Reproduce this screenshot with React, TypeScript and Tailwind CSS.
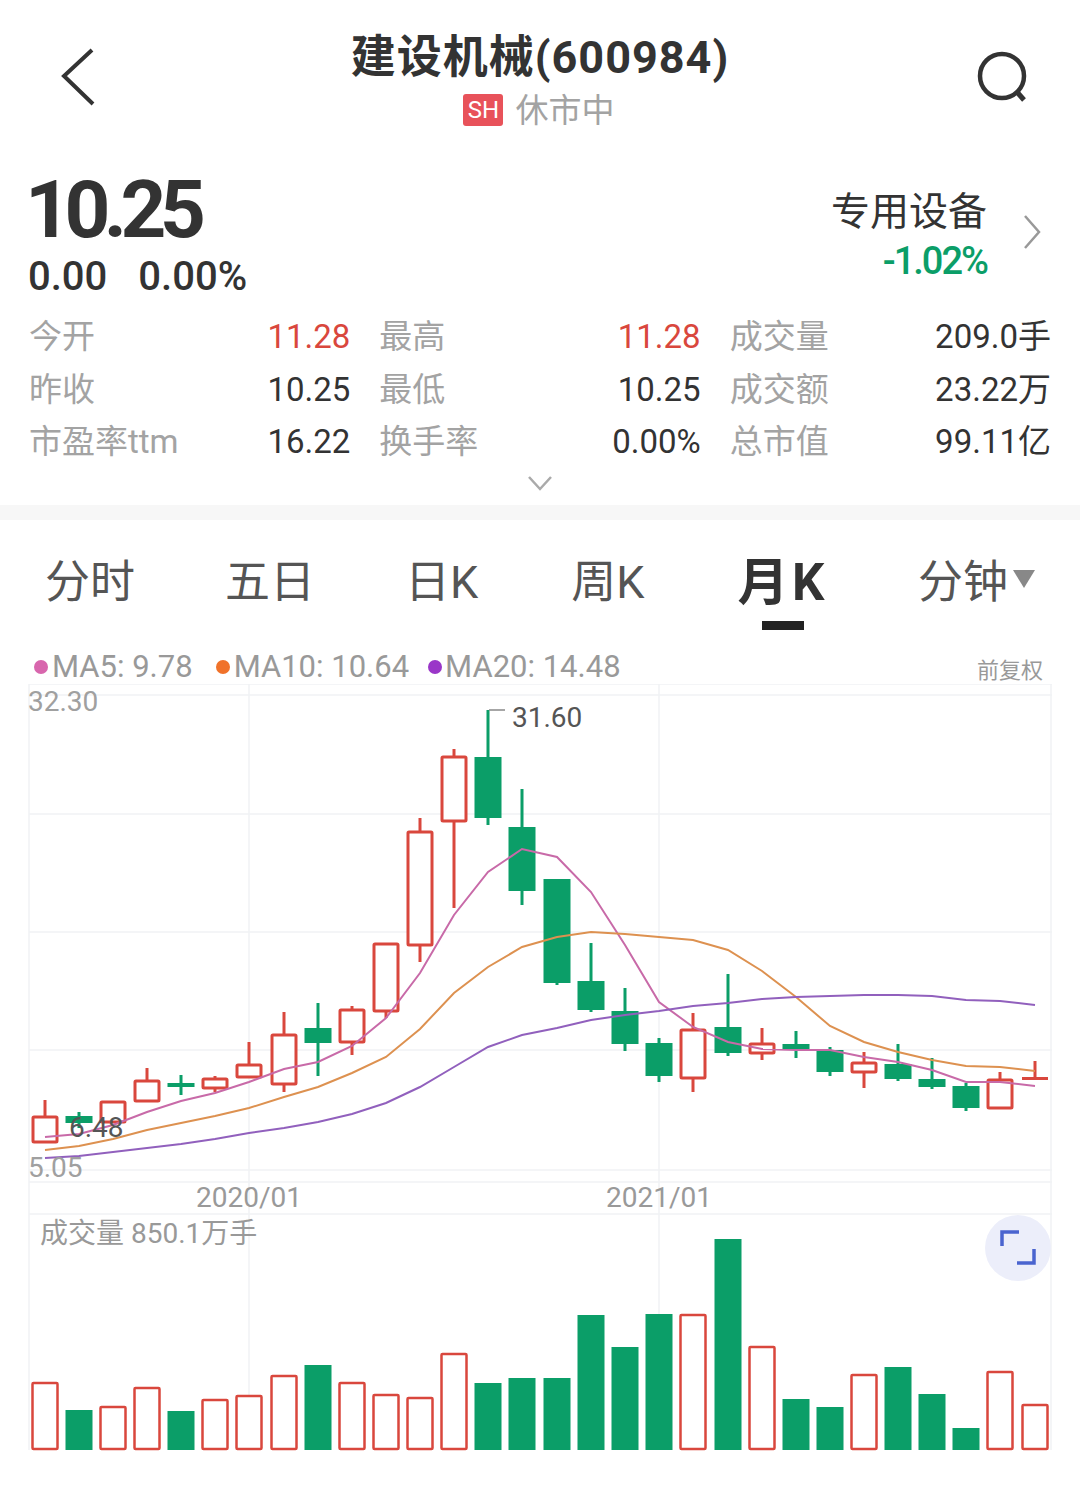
const FONT = '"Roboto","Noto Sans CJK SC",sans-serif';

type C = [number, number, number, number, number, "r" | "g"];
const candles: C[] = [
  [45, 1100, 1117, 1142, 1142, "r"],
  [79, 1112, 1116, 1123, 1128, "g"],
  [113, 1101, 1102, 1122, 1122, "r"],
  [147, 1068, 1081, 1101, 1101, "r"],
  [181, 1075, 1083, 1087, 1095, "g"],
  [215, 1076, 1079, 1088, 1092, "r"],
  [249, 1042, 1065, 1077, 1077, "r"],
  [284, 1012, 1035, 1084, 1092, "r"],
  [318, 1003, 1028, 1043, 1076, "g"],
  [352, 1006, 1010, 1042, 1055, "r"],
  [386, 943, 944, 1011, 1018, "r"],
  [420, 818, 832, 945, 962, "r"],
  [454, 749, 757, 821, 908, "r"],
  [488, 710, 757, 818, 825, "g"],
  [522, 789, 827, 891, 905, "g"],
  [557, 879, 879, 983, 985, "g"],
  [591, 943, 981, 1010, 1012, "g"],
  [625, 988, 1011, 1044, 1051, "g"],
  [659, 1038, 1043, 1076, 1082, "g"],
  [693, 1013, 1030, 1078, 1092, "r"],
  [728, 974, 1027, 1053, 1056, "g"],
  [762, 1028, 1044, 1053, 1060, "r"],
  [796, 1031, 1044, 1050, 1058, "g"],
  [830, 1047, 1050, 1072, 1076, "g"],
  [864, 1052, 1063, 1072, 1088, "r"],
  [898, 1044, 1064, 1079, 1081, "g"],
  [932, 1058, 1079, 1087, 1089, "g"],
  [966, 1083, 1086, 1108, 1111, "g"],
  [1000, 1072, 1080, 1108, 1109, "r"],
];

const xs = [...candles.map((c) => c[0]), 1035];
const ma5 = [1137, 1134, 1125, 1112, 1101, 1093, 1082, 1069, 1062, 1046, 1018, 973, 915, 872, 849, 857, 892, 945, 1002, 1027, 1042, 1049, 1050, 1050, 1057, 1062, 1070, 1082, 1082, 1086];
const ma10 = [1150, 1146, 1139, 1130, 1123, 1116, 1108, 1097, 1087, 1073, 1057, 1029, 993, 967, 947, 937, 932, 934, 937, 940, 950, 971, 997, 1026, 1042, 1052, 1060, 1066, 1067, 1071];
const ma20 = [1158, 1156, 1152, 1148, 1144, 1139, 1133, 1128, 1122, 1114, 1103, 1087, 1067, 1047, 1035, 1028, 1020, 1015, 1011, 1006, 1003, 999, 997, 996, 995, 995, 996, 1000, 1001, 1005];
const pts = (a: number[]) => a.map((y, i) => `${xs[i]},${y}`).join(" ");

const vols: [number, "r" | "g"][] = [
  [1382, "r"], [1410, "g"], [1406, "r"], [1387, "r"], [1411, "g"], [1399, "r"], [1395, "r"], [1375, "r"], [1365, "g"], [1382, "r"],
  [1394, "r"], [1397, "r"], [1353, "r"], [1383, "g"], [1378, "g"], [1378, "g"], [1315, "g"], [1347, "g"], [1314, "g"], [1314, "r"],
  [1239, "g"], [1346, "r"], [1399, "g"], [1407, "g"], [1374, "r"], [1367, "g"], [1394, "g"], [1428, "g"], [1371, "r"], [1404, "r"],
];

const RED = "#d9473d";
const GREEN = "#0b9e68";

function Chart() {
  return (
    <svg viewBox="0 684 1080 828" className="block w-[1080px] h-[828px]">
      <g stroke="#f1f2f4" strokeWidth="1.5" fill="none">
        {[684, 695, 814, 932, 1050, 1170, 1182, 1214].map((y) => (
          <line key={y} x1="29" x2="1052" y1={y} y2={y} />
        ))}
        {[29, 249, 659, 1051].map((x) => (
          <line key={x} x1={x} x2={x} y1="684" y2="1450" />
        ))}
      </g>
      {candles.map(([x, hi, top, bot, lo, k]) =>
        k === "g" ? (
          <g key={x} fill={GREEN} stroke="none">
            <rect x={x - 1.5} y={hi} width="3" height={lo - hi} />
            <rect x={x - 13.5} y={top} width="27" height={bot - top} />
          </g>
        ) : (
          <g key={x} stroke={RED} strokeWidth="3" fill="none">
            <line x1={x} x2={x} y1={hi} y2={top} />
            <line x1={x} x2={x} y1={bot} y2={lo} />
            <rect x={x - 12} y={top} width="24" height={bot - top} fill="#fff" rx="1" />
          </g>
        )
      )}
      <g stroke={RED} strokeWidth="3" fill="none">
        <line x1="1035" x2="1035" y1="1061" y2="1079" />
        <line x1="1022" x2="1048" y1="1078.5" y2="1078.5" />
      </g>
      <path d="M489 710 H505" stroke="#888" strokeWidth="1.5" fill="none" />
      <polyline points={pts(ma5)} fill="none" stroke="#c86aa8" strokeWidth="2" />
      <polyline points={pts(ma10)} fill="none" stroke="#dd9150" strokeWidth="2" />
      <polyline points={pts(ma20)} fill="none" stroke="#9160bd" strokeWidth="2" />
      {vols.map(([top, k], i) => {
        const x = i === 20 ? 728 : xs[i];
        return k === "g" ? (
          <rect key={i} x={x - 13.5} y={top} width="27" height={1450 - top} fill={GREEN} />
        ) : (
          <rect key={i} x={x - 12.5} y={top + 1} width="25" height={1448 - top} fill="#fff" stroke={RED} strokeWidth="2.5" rx="1" />
        );
      })}
    </svg>
  );
}

function Row({ a, b, hot }: { a: string; b: string; hot?: boolean }) {
  return (
    <div className="flex items-center justify-between h-[52.5px]">
      <span className="text-[#a3a3a3]">{a}</span>
      <span className={hot ? "text-[#d9473d]" : "text-[#333333]"}>{b}</span>
    </div>
  );
}

const tabs = ["分时", "五日", "日K", "周K"];

export default function App() {
  return (
    <div className="relative w-[1080px] h-[1512px] bg-white overflow-hidden" style={{ fontFamily: FONT }}>
      {/* header */}
      <div className="grid grid-cols-[1fr_auto_1fr] items-start h-[158px] pt-[30px]">
        <div className="pl-[60px] pt-[18px]">
          <svg width="36" height="60" viewBox="0 0 36 60" className="block">
            <path d="M32 2 L4 28 L33 56" fill="none" stroke="#333" strokeWidth="4" />
          </svg>
        </div>
        <div className="flex flex-col items-center">
          <div className="text-[45px] leading-[56px] font-bold text-[#333333] tracking-[1px]">建设机械(600984)</div>
          <div className="flex items-center gap-[12px] h-[44px] mt-[2px] -ml-[2px]">
            <span className="flex items-center justify-center w-[40px] h-[32px] rounded-[3px] bg-[#e8525a] text-white text-[24px] leading-none">SH</span>
            <span className="text-[33px] text-[#a3a3a3] leading-none">休市中</span>
          </div>
        </div>
        <div className="flex justify-end pr-[50px] pt-[20px]">
          <svg width="54" height="54" viewBox="0 0 54 54" className="block">
            <circle cx="26" cy="26" r="22" fill="none" stroke="#333" strokeWidth="4.5" />
            <path d="M41 42 L48 50" fill="none" stroke="#333" strokeWidth="5" />
          </svg>
        </div>
      </div>

      {/* price */}
      <div className="flex justify-between h-[150px] pl-[28px] pr-[38px]">
        <div>
          <div className="text-[80px] leading-[104px] font-bold text-[#333333] tracking-[-6.5px] -ml-[3px]">10.25</div>
          <div className="flex gap-[31px] text-[40px] leading-[38px] font-medium text-[#333333] -mt-[4px]">
            <span>0.00</span>
            <span>0.00%</span>
          </div>
        </div>
        <div className="flex items-center gap-[35px] h-[150px] -mt-[2px]">
          <div className="flex flex-col items-end mt-[10px]">
            <span className="text-[39px] leading-[50px] text-[#333333]">专用设备</span>
            <span className="text-[38px] leading-[48px] font-medium text-[#0b9e68] tracking-[-2px]">-1.02%</span>
          </div>
          <svg width="20" height="36" viewBox="0 0 20 36" className="block mt-[2px]">
            <path d="M3 2 L17 18 L3 34" fill="none" stroke="#999" strokeWidth="2.5" />
          </svg>
        </div>
      </div>

      {/* table */}
      <div className="grid grid-cols-3 gap-x-[29px] pl-[29px] pr-[29px] text-[33px] mt-[2.5px]">
        <div>
          <Row a="今开" b="11.28" hot />
          <Row a="昨收" b="10.25" />
          <Row a="市盈率ttm" b="16.22" />
        </div>
        <div>
          <Row a="最高" b="11.28" hot />
          <Row a="最低" b="10.25" />
          <Row a="换手率" b="0.00%" />
        </div>
        <div>
          <Row a="成交量" b="209.0手" />
          <Row a="成交额" b="23.22万" />
          <Row a="总市值" b="99.11亿" />
        </div>
      </div>
      <div className="flex justify-center h-[37px] pt-[7px]">
        <svg width="26" height="16" viewBox="0 0 26 16" className="block">
          <path d="M2 2 L13 14 L24 2" fill="none" stroke="#aaa" strokeWidth="2.5" />
        </svg>
      </div>
      <div className="h-[15px] bg-[#f7f7f7]" />

      {/* tabs */}
      <div className="relative flex items-center h-[130px] text-[45px] text-[#555555] pb-[4px]">
        {tabs.map((t, i) => (
          <span key={t} className={["ml-[45px]", "ml-[90px]", "ml-[90px]", "ml-[93px]"][i]}>{t}</span>
        ))}
        <span className="ml-[93px] text-[51px] font-bold text-[#333333] tracking-[3.5px]">月K</span>
        <span className="ml-[90px]">分钟</span>
        <svg width="22" height="20" viewBox="0 0 22 20" className="block ml-[5px] -mt-[8px]">
          <path d="M0 1 H22 L11 19 Z" fill="#888" />
        </svg>
        <span className="absolute left-[762px] top-[101px] w-[42px] h-[9px] bg-[#222222]" />
      </div>

      {/* legend */}
      <div className="relative flex items-center h-[34px] pl-[34px] text-[31px] text-[#999999]">
        <span className="w-[14px] h-[14px] rounded-full bg-[#d866ad] mr-[4px]" />
        <span>MA5: 9.78</span>
        <span className="w-[14px] h-[14px] rounded-full bg-[#f0722a] ml-[23px] mr-[4px]" />
        <span>MA10: 10.64</span>
        <span className="w-[14px] h-[14px] rounded-full bg-[#9a36c8] ml-[19px] mr-[3px]" />
        <span>MA20: 14.48</span>
        <span className="ml-auto mr-[37px] mt-[6px] text-[22px]">前复权</span>
      </div>

      {/* chart */}
      <div className="relative">
        <Chart />
        <span className="absolute left-[28px] top-[1px] text-[28px] leading-[34px] text-[#a0a0a0]">32.30</span>
        <span className="absolute left-[512px] top-[17px] text-[28px] leading-[34px] text-[#555555]">31.60</span>
        <span className="absolute left-[69px] top-[427px] text-[28px] leading-[34px] text-[#555555]">6.48</span>
        <span className="absolute left-[28px] top-[467px] text-[28px] leading-[34px] text-[#a0a0a0]">5.05</span>
        <span className="absolute left-[196px] top-[497px] text-[28px] leading-[34px] text-[#999999]">2020/01</span>
        <span className="absolute left-[606px] top-[497px] text-[28px] leading-[34px] text-[#999999]">2021/01</span>
        <span className="absolute left-[40px] top-[533px] text-[28px] leading-[34px] text-[#999999]">成交量 850.1万手</span>
        <div className="absolute left-[985px] top-[531px] w-[66px] h-[66px] rounded-full bg-[#eceefa] flex items-center justify-center">
          <svg width="36" height="36" viewBox="0 0 36 36" className="block">
            <path d="M2 16 V2 H19 M34 19 V33 H17" fill="none" stroke="#4a64cf" strokeWidth="3.5" />
          </svg>
        </div>
      </div>
    </div>
  );
}
